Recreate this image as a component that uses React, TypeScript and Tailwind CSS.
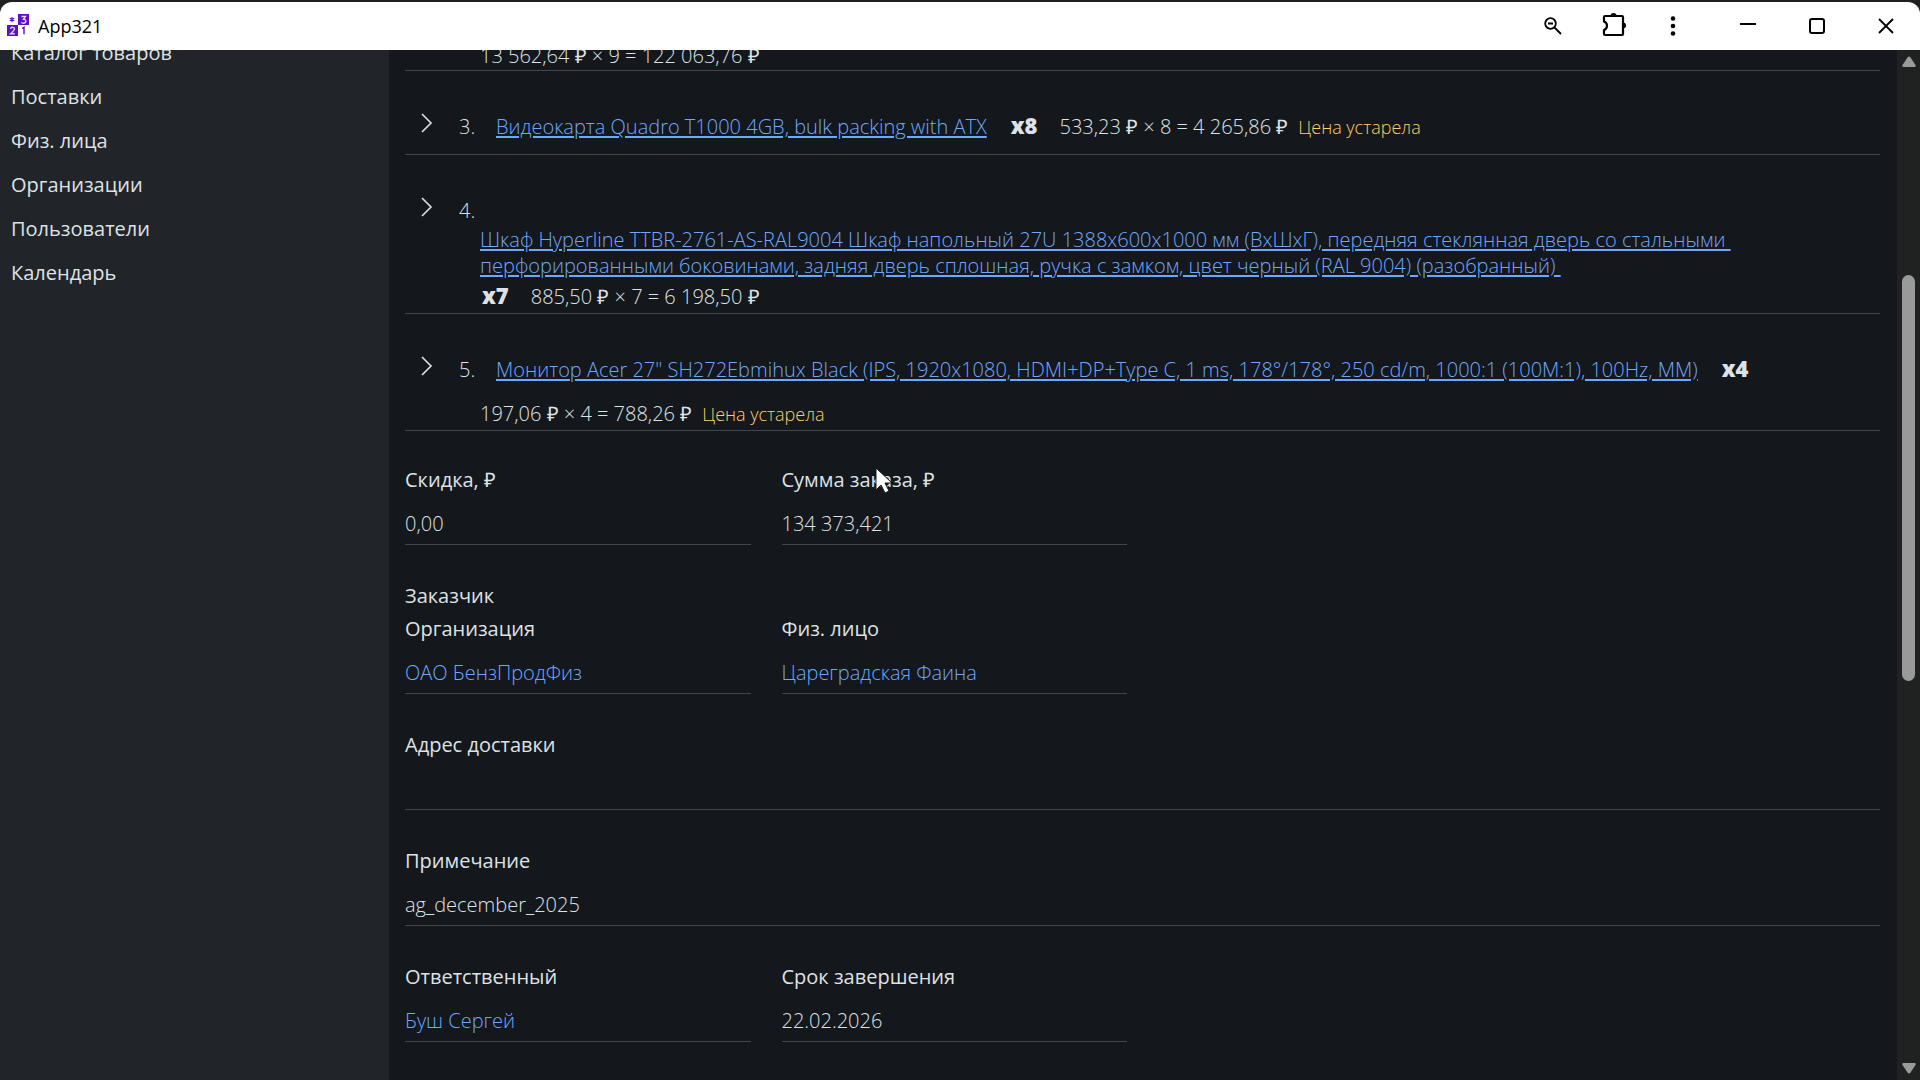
import React from 'react';

const menuItems = ['Каталог товаров', 'Поставки', 'Физ. лица', 'Организации', 'Пользователи', 'Календарь'];

interface OrderItem {
    id: number;
    title: string;
    qty: number;
    price: string;
    outdated?: boolean;
    long?: boolean;
}

const orderItems: OrderItem[] = [
    { id: 3, title: 'Видеокарта Quadro T1000 4GB, bulk packing with ATX', qty: 8, price: '533,23 ₽ × 8 = 4 265,86 ₽', outdated: true },
    {
        id: 4,
        title: 'Шкаф Hyperline TTBR-2761-AS-RAL9004 Шкаф напольный 27U 1388х600х1000 мм (ВхШхГ), передняя стеклянная дверь со стальными\u00a0 перфорированными боковинами, задняя дверь сплошная, ручка с замком, цвет черный (RAL 9004) (разобранный)\u00a0',
        qty: 7,
        price: '885,50 ₽ × 7 = 6 198,50 ₽',
        long: true,
    },
    { id: 5, title: 'Монитор Acer 27" SH272Ebmihux Black (IPS, 1920x1080, HDMI+DP+Type C, 1 ms, 178°/178°, 250 cd/m, 1000:1 (100M:1), 100Hz, MM)', qty: 4, price: '197,06 ₽ × 4 = 788,26 ₽', outdated: true },
];

const Logo = () => (
    <svg width="24" height="24" viewBox="0 0 24 24" aria-hidden="true">
        <rect x="12" y="0" width="11" height="11" fill="#5b10c8" />
        <rect x="1" y="11" width="11" height="11" fill="#5b10c8" />
        <path d="M6 3v5M3.8 4.200l4.400 2.600M3.8 6.800l4.400-2.600" stroke="#5b10c8" strokeWidth="1.2" />
        <path d="M15.500 2.500h4l-2 2.700c3.500 0 2.800 4-.2 4-1 0-1.700-.4-2-1" fill="none" stroke="#e4d2ff" strokeWidth="1.4" />
        <path d="M4.500 15c.3-2.400 4-2.200 4 .1 0 1.600-2.500 3-4 4.700h4.300" fill="none" stroke="#e4d2ff" strokeWidth="1.4" />
        <path d="M16 14.500l2-1.200v7" fill="none" stroke="#5b10c8" strokeWidth="1.4" />
    </svg>
);

const TitleBar = () => (
    <header className="bg-[#202020] pt-0.5">
        <div className="flex h-12 items-center rounded-t-xl bg-white pl-1.5 text-black">
            <Logo />
            <span className="ml-2 text-lg">App321</span>
            <div className="ml-auto flex items-center">
                <button type="button" aria-label="Масштаб" className="flex w-[61px] justify-center">
                    <svg width="18" height="18" viewBox="0 0 18 18" fill="none" stroke="currentColor" strokeWidth="1.800">
                        <circle cx="6.500" cy="6.500" r="5.300" />
                        <path d="M10.500 10.500l6.500 6.500M4 6.500h5" />
                    </svg>
                </button>
                <button type="button" aria-label="Расширения" className="flex w-[61px] justify-center">
                    <svg width="26" height="26" viewBox="0 0 26 26">
                        <path d="M4 3h17q1 0 1 1v17q0 1-1 1H4q-1 0-1-1v-4c4-1.500 4-7 0-8.500V4q0-1 1-1z" fill="none" stroke="currentColor" strokeWidth="2.200" strokeLinejoin="round" />
                        <path d="M9.500 3a3 3 0 0 1 6 0zM22 9.500a3 3 0 0 1 0 6z" fill="currentColor" />
                    </svg>
                </button>
                <button type="button" aria-label="Меню" className="flex w-[57px] justify-center">
                    <svg width="6" height="20" viewBox="0 0 6 20" fill="currentColor">
                        <circle cx="3" cy="2.500" r="2.300" />
                        <circle cx="3" cy="10" r="2.300" />
                        <circle cx="3" cy="17.500" r="2.300" />
                    </svg>
                </button>
                <button type="button" aria-label="Свернуть" className="ml-3 flex w-[69px] justify-center">
                    <svg width="16" height="16" viewBox="0 0 16 16" stroke="currentColor" strokeWidth="2"><path d="M0 6h16" /></svg>
                </button>
                <button type="button" aria-label="Развернуть" className="flex w-[69px] justify-center">
                    <svg width="16" height="16" viewBox="0 0 16 16" fill="none" stroke="currentColor" strokeWidth="2"><rect x="1" y="1" width="14" height="14" rx="2" /></svg>
                </button>
                <button type="button" aria-label="Закрыть" className="flex w-[69px] justify-center">
                    <svg width="16" height="16" viewBox="0 0 16 16" stroke="currentColor" strokeWidth="1.800"><path d="M1 1l14 14M15 1L1 15" /></svg>
                </button>
            </div>
        </div>
    </header>
);

const ItemRow = ({ item }: { item: OrderItem }) => (
    <li className="flex border-b border-[#41464b] pt-[39px]">
        <button type="button" aria-label={`Раскрыть позицию ${item.id}`} className="flex h-[25px] w-[54px] items-center pl-4">
            <svg width="12" height="20" viewBox="0 0 12 20" fill="none" stroke="currentColor" strokeWidth="1.600"><path d="M1 1l9 9-9 9" /></svg>
        </button>
        <span className="w-[21px] leading-[33px]">{item.id}.</span>
        {item.long ? (
            <div className="flex-1 pt-[33px]">
                <a href="#" className="block leading-[26px] text-[#6ea8fe] underline decoration-2 underline-offset-2">{item.title}</a>
                <p className="pt-0.5 leading-8">
                    <b className="mr-5.5 ml-0.5 text-[22px] leading-none font-extrabold">x{item.qty}</b>
                    {item.price}
                </p>
            </div>
        ) : (
            <div className="flex flex-1 flex-wrap items-baseline leading-[33px]">
                <a href="#" className="mr-6 mb-[11px] ml-4 text-[#6ea8fe] underline decoration-2 underline-offset-2">{item.title}</a>
                <b className="mr-5.5 text-[22px] leading-none font-extrabold">x{item.qty}</b>
                <span>{item.price}</span>
                {item.outdated && <span className="ml-2.5 text-lg leading-none text-[#ffcf66]">Цена устарела</span>}
            </div>
        )}
    </li>
);

interface FieldProps {
    id: string;
    label: string;
    value?: string;
    link?: boolean;
    children?: React.ReactNode;
}

const Field = ({ id, label, value = '', link, children }: FieldProps) => (
    <div className="relative">
        <label htmlFor={id} className="block leading-[33px] font-normal">{label}</label>
        <div className="flex h-[49px] items-end border-b border-[#41464b] pb-1">
            {link ? (
                <a id={id} href="#" className="leading-[33px] text-[#6ea8fe]">{value}</a>
            ) : (
                <input id={id} type="text" readOnly value={value} className="w-full bg-transparent leading-[33px] outline-none" />
            )}
        </div>
        {children}
    </div>
);

const App = () => {
    return (
        <div className="flex h-screen flex-col overflow-hidden bg-[#14171b] font-['Open_Sans',sans-serif] text-[#dee2e6]">
            <TitleBar />
            <div className="flex min-h-0 flex-1">
                <nav className="w-[389px] shrink-0 overflow-hidden bg-[#212529]">
                    <div className="-mt-[19px] flex flex-col pl-[11px] text-xl">
                        {menuItems.map(name => (
                            <a key={name} href="#" className="leading-[44px]">{name}</a>
                        ))}
                    </div>
                </nav>

                <main className="flex-1 overflow-hidden pr-[17px] pl-4 text-xl font-light">
                    <ul>
                        <li className="-mt-2 border-b border-[#41464b] pl-[75px] leading-7">13 562,64 ₽ × 9 = 122 063,76 ₽</li>
                        {orderItems.map(item => <ItemRow key={item.id} item={item} />)}
                    </ul>

                    <section className="mt-8 grid grid-cols-4 gap-x-[31px]">
                        <Field id="discount" label="Скидка, ₽" value="0,00" />
                        <Field id="total" label="Сумма заказа, ₽" value="134 373,421">
                            <svg className="absolute top-1 left-[93px]" width="18" height="28" viewBox="0 0 18 28">
                                <path d="M1 1v22l5-5 4 8 4-2-4-8h7z" fill="#fff" stroke="#14171b" strokeWidth="1" />
                            </svg>
                        </Field>
                    </section>

                    <section className="mt-[34px]">
                        <h2 className="leading-[33px] font-normal">Заказчик</h2>
                        <div className="grid grid-cols-4 gap-x-[31px]">
                            <Field id="company" label="Организация" value="ОАО БензПродФиз" link />
                            <Field id="person" label="Физ. лицо" value="Цареградская Фаина" link />
                        </div>
                    </section>

                    <section className="mt-[34px] flex flex-col gap-[34px]">
                        <Field id="address" label="Адрес доставки" />
                        <Field id="note" label="Примечание" value="ag_december_2025" />
                        <div className="grid grid-cols-4 gap-x-[31px]">
                            <Field id="manager" label="Ответственный" value="Буш Сергей" link />
                            <Field id="deadline" label="Срок завершения" value="22.02.2026" />
                        </div>
                    </section>
                </main>

                {/* Scrollbar */}
                <div className="flex w-[23px] shrink-0 flex-col items-center bg-[#202121] py-1.5 text-[#9a9a9a]">
                    <svg width="14" height="11" viewBox="0 0 14 11" fill="currentColor"><path d="M5.500 1.500q1.500-2 3 0l5 7.500q.8 2-1 2h-11q-1.800 0-1-2z" /></svg>
                    <div className="flex min-h-0 w-[13px] flex-1 flex-col">
                        <div className="h-[20.9%]" />
                        <div className="h-[40.7%] rounded-full bg-[#9a9a9a]" />
                    </div>
                    <svg width="14" height="11" viewBox="0 0 14 11" fill="currentColor"><path d="M5.500 9.500q1.500 2 3 0l5-7.500q.8-2-1-2h-11q-1.800 0-1 2z" /></svg>
                </div>
            </div>
        </div>
    );
};

export default App;
